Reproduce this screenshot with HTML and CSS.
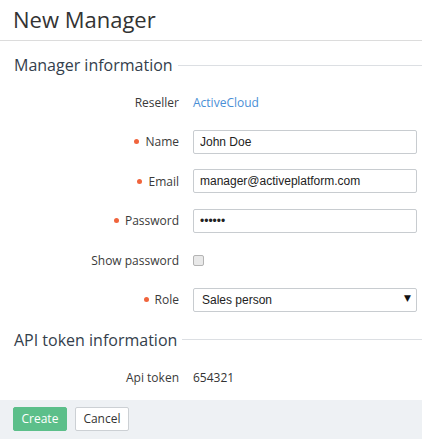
FILE: index.html
```html
<!DOCTYPE html>
<html lang="en">
<head>
  <meta charset="UTF-8">
  <meta name="viewport" content="width=device-width, initial-scale=1.0">
  <title>New Manager</title>
  <link rel="stylesheet" href="styles.css">
</head>
<body>
  <div class="page">
    <h1 class="page__title">New Manager</h1>

    <form class="manager">
      <h2 class="manager__section">Manager information</h2>

      <div class="manager__row">
        <label class="manager__label">Reseller</label>
        <div class="manager__field"><a href="#" class="manager__link">ActiveCloud</a></div>
      </div>
      <div class="manager__row">
        <label class="manager__label manager__label--required" for="name">Name</label>
        <div class="manager__field"><input type="text" id="name" class="manager__input" value="John Doe"></div>
      </div>
      <div class="manager__row">
        <label class="manager__label manager__label--required" for="email">Email</label>
        <div class="manager__field"><input type="text" id="email" class="manager__input" value="manager@activeplatform.com"></div>
      </div>
      <div class="manager__row">
        <label class="manager__label manager__label--required" for="password">Password</label>
        <div class="manager__field"><input type="password" id="password" class="manager__input" value="123456"></div>
      </div>
      <div class="manager__row">
        <label class="manager__label" for="show">Show password</label>
        <div class="manager__field"><input type="checkbox" id="show" class="manager__check"></div>
      </div>
      <div class="manager__row">
        <label class="manager__label manager__label--required" for="role">Role</label>
        <div class="manager__field">
          <div class="manager__select">
            <select id="role">
              <option>Sales person</option>
            </select>
          </div>
        </div>
      </div>

      <h2 class="manager__section manager__section--api">API token information</h2>

      <div class="manager__row">
        <label class="manager__label">Api token</label>
        <div class="manager__field">654321</div>
      </div>

      <div class="manager__footer">
        <button type="submit" class="btn btn--create">Create</button>
        <button type="button" class="btn btn--cancel">Cancel</button>
      </div>
    </form>
  </div>
</body>
</html>
```

FILE: styles.css
```css
* {
  box-sizing: border-box;
}

body, html {
  margin: 0;
  padding: 0;
  background: #fff;
  font-family: "Open Sans", sans-serif;
  color: #333;
}

.page__title {
  margin: 0;
  padding: 6px 13px 8px;
  font-size: 22px;
  line-height: 26px;
  font-weight: 400;
  color: #333;
  border-bottom: 1px solid #dcdcdc;
}

.manager__section {
  display: flex;
  align-items: center;
  margin: 12px 0 13px;
  padding: 0 0 0 14px;
  font-size: 16px;
  line-height: 24px;
  font-weight: 400;
  color: #34404c;
}

.manager__section::after {
  content: "";
  flex: 1;
  height: 1px;
  margin-left: 5px;
  background: #dcdfe3;
}

.manager__section--api {
  margin-top: 16px;
  margin-bottom: 14px;
}

.manager__row {
  display: flex;
  align-items: center;
  height: 24px;
  margin-bottom: 15.6px;
  padding-right: 5px;
  font-size: 12px;
}

.manager__label {
  width: 179px;
  text-align: right;
  color: #3a3a3a;
}

.manager__label--required::before {
  content: "";
  display: inline-block;
  width: 5px;
  height: 5px;
  margin: 0 6px 2px 0;
  border-radius: 50%;
  background: #f0643c;
}

.manager__field {
  flex: 1;
  margin-left: 14px;
  display: flex;
  align-items: center;
}

.manager__link {
  color: #4a8fd6;
  text-decoration: none;
}

.manager__input,
.manager__select select {
  display: block;
  width: 100%;
  height: 24px;
  padding: 0 6px;
  border: 1px solid #c8ccd0;
  border-radius: 2px;
  font-family: "Liberation Sans", Arial, sans-serif;
  font-size: 12px;
  color: #222;
  background: #fff;
  outline: none;
}

.manager__check {
  appearance: none;
  width: 11px;
  height: 11px;
  margin: 0;
  border: 1px solid #b4b4b4;
  border-radius: 2px;
  background: #e9e9e9;
}

.manager__select {
  position: relative;
  width: 100%;
}

.manager__select select {
  appearance: none;
  padding-left: 8px;
}

.manager__select::after {
  content: "▼";
  position: absolute;
  right: 6px;
  top: 5px;
  font-family: "DejaVu Sans", sans-serif;
  font-size: 9px;
  color: #111;
  pointer-events: none;
}

.manager__footer {
  display: flex;
  gap: 8px;
  margin-top: -5.6px;
  padding: 7px 13px 8px;
  background: #eef1f4;
}

.btn {
  height: 24px;
  padding: 0 7.5px;
  border-radius: 2px;
  font-family: "Open Sans", sans-serif;
  font-size: 12px;
  cursor: pointer;
}

.btn--create {
  border: 1px solid #5cbf8a;
  background: #5cbf8a;
  color: #fff;
}

.btn--cancel {
  border: 1px solid #ccd0d4;
  background: #fff;
  color: #333;
}
```
